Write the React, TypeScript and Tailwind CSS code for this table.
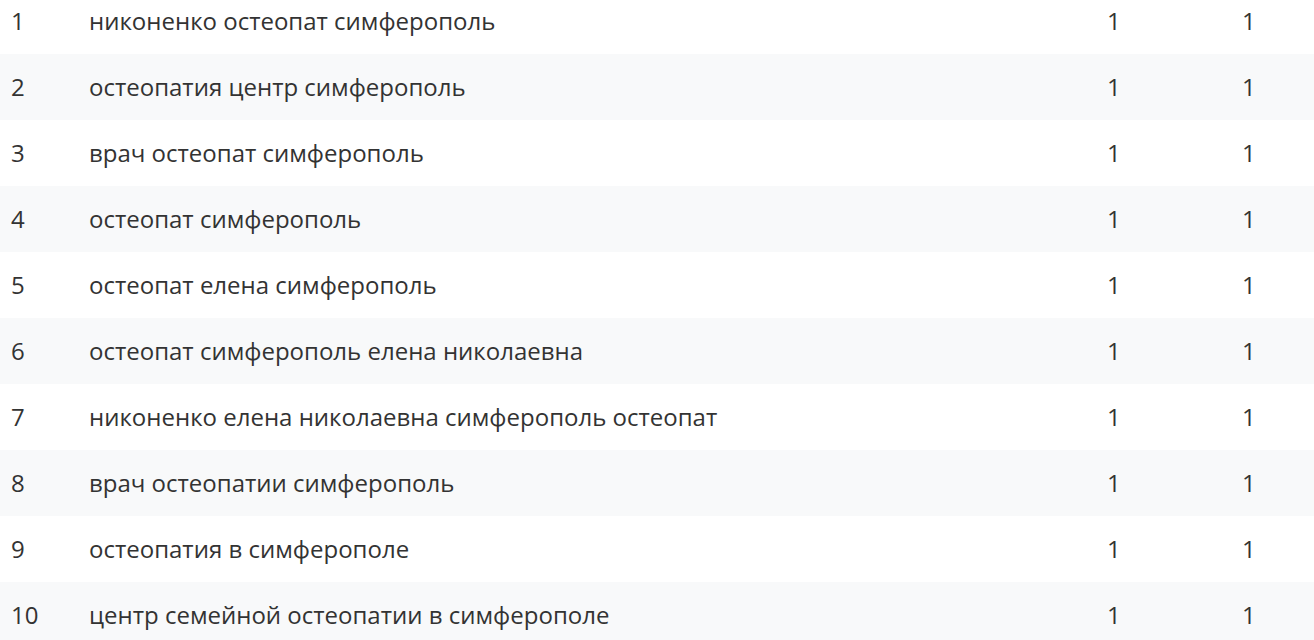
import React from "react";

const rows = [
  "никоненко остеопат симферополь",
  "остеопатия центр симферополь",
  "врач остеопат симферополь",
  "остеопат симферополь",
  "остеопат елена симферополь",
  "остеопат симферополь елена николаевна",
  "никоненко елена николаевна симферополь остеопат",
  "врач остеопатии симферополь",
  "остеопатия в симферополе",
  "центр семейной остеопатии в симферополе",
];

export default function App() {
  return (
    <div
      className="w-[1314px] h-[640px] overflow-hidden bg-white text-[#333333] text-[24px]"
      style={{ fontFamily: '"Open Sans", "Noto Sans", sans-serif' }}
    >
      <div className="-mt-[12px] flex flex-col">
        {rows.map((q, i) => (
          <div
            key={i}
            className={`grid grid-cols-[89px_1018px_135px_72px] h-[66px] items-center ${
              i % 2 === 1 ? "bg-[#f8f9fa]" : "bg-white"
            }`}
          >
            <div className="pl-[11px]">{i + 1}</div>
            <div>{q}</div>
            <div>1</div>
            <div>1</div>
          </div>
        ))}
      </div>
    </div>
  );
}
